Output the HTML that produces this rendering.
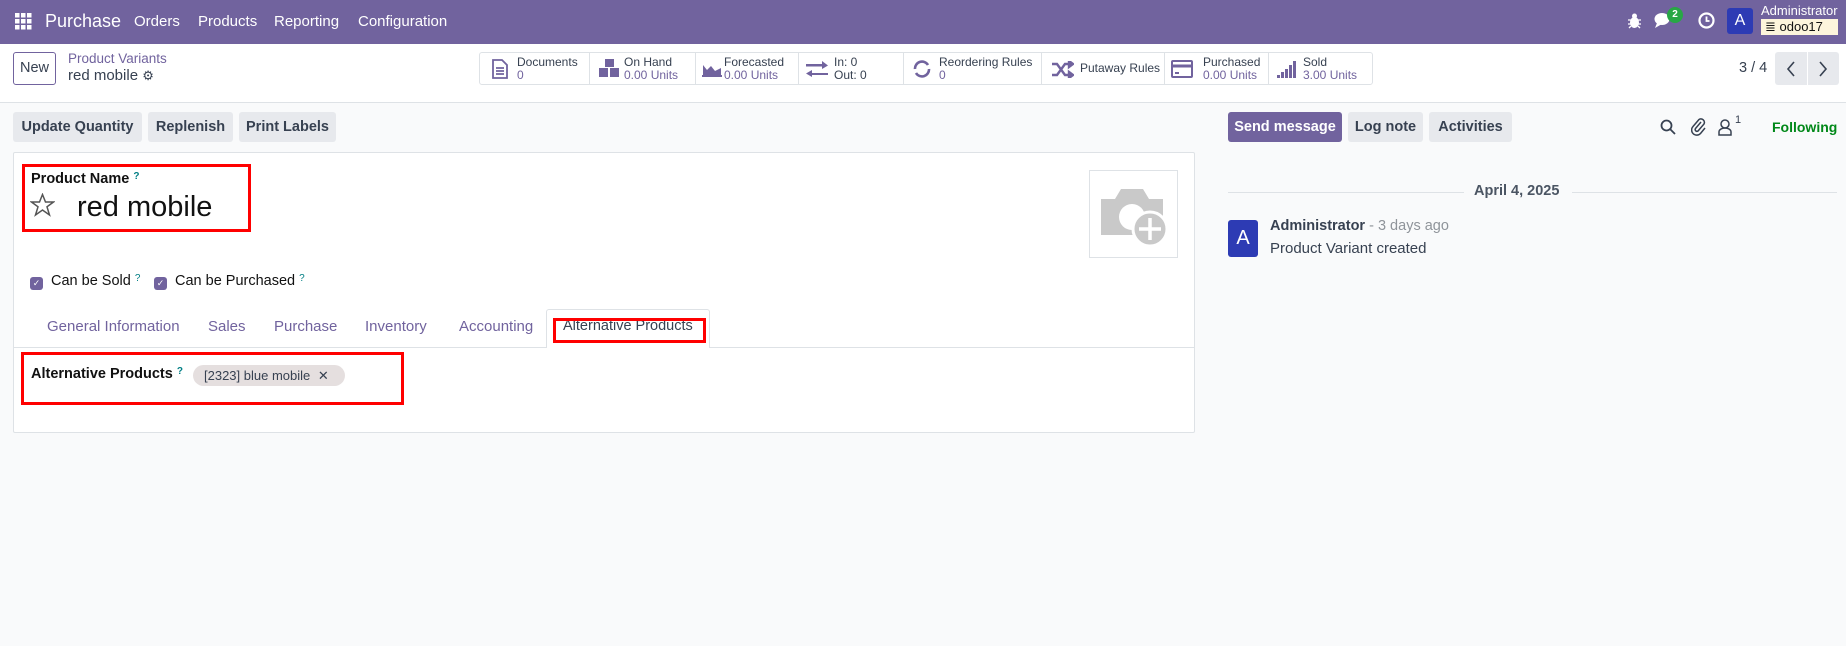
<!DOCTYPE html>
<html><head><meta charset="utf-8">
<style>
*{box-sizing:border-box;margin:0;padding:0}
body{width:1846px;height:646px;overflow:hidden;background:#f9fafb;font-family:"Liberation Sans",sans-serif;font-size:15px;color:#374151;position:relative}
.a{position:absolute;white-space:nowrap}
.top{left:0;top:0;width:1846px;height:44px;background:#71639e;color:#fff}
.cp{left:0;top:44px;width:1846px;height:59px;background:#fff;border-bottom:1px solid #dee2e6}
.btn{position:absolute;background:#e7e9ed;border-radius:3px;font-weight:bold;font-size:14.5px;color:#374151;text-align:center;line-height:30px;height:30px}
.stats{left:479px;top:52px;width:894px;height:33px;border:1px solid #dee2e6;border-radius:3px}
.st{position:absolute;top:0;height:31px;border-right:1px solid #dee2e6;font-size:12px;line-height:13px;padding-top:3px}
.st b{font-weight:normal;color:#374151;display:block}
.st i{font-style:normal;color:#71639e;display:block}
.sheet{left:13px;top:152px;width:1182px;height:281px;background:#fff;border:1px solid #dee2e6;border-radius:2px}
.red{position:absolute;border:3px solid #f00}
.q{color:#017e84;font-size:10px;vertical-align:top}
.cb{display:inline-block;width:13px;height:13px;background:#71639e;border-radius:3px;vertical-align:-1px;margin-right:8px;color:#fff;font-size:9px;text-align:center;line-height:13px}
.tab{position:absolute;top:318px;color:#71639e;font-size:15px}
</style></head><body>
<div class="a top">
  <svg class="a" style="left:15px;top:13px" width="17" height="17" viewBox="0 0 17 17" fill="#fff"><rect x="0" y="0" width="4.5" height="4.5"/><rect x="6" y="0" width="4.5" height="4.5"/><rect x="12" y="0" width="4.5" height="4.5"/><rect x="0" y="6" width="4.5" height="4.5"/><rect x="6" y="6" width="4.5" height="4.5"/><rect x="12" y="6" width="4.5" height="4.5"/><rect x="0" y="12" width="4.5" height="4.5"/><rect x="6" y="12" width="4.5" height="4.5"/><rect x="12" y="12" width="4.5" height="4.5"/></svg>
  <div class="a" style="left:45px;top:11px;font-size:18px">Purchase</div>
  <div class="a" style="left:134px;top:13px">Orders</div>
  <div class="a" style="left:198px;top:13px">Products</div>
  <div class="a" style="left:274px;top:13px">Reporting</div>
  <div class="a" style="left:358px;top:13px">Configuration</div>
  <svg class="a" style="left:1628px;top:13px" width="13" height="16" viewBox="0 0 13 16" fill="#fff"><ellipse cx="6.5" cy="9.5" rx="4.5" ry="5.5"/><circle cx="6.5" cy="3" r="2.5"/><path d="M0 7H13M0 11H13M1 15L3 13M12 15L10 13" stroke="#fff" stroke-width="1.3"/></svg>
  <svg class="a" style="left:1654px;top:12px" width="20" height="18" viewBox="0 0 20 18" fill="#fff"><ellipse cx="8" cy="7" rx="7.5" ry="6"/><path d="M3 11 L1 16 L8 12Z"/></svg>
  <div class="a" style="left:1667px;top:7px;width:16px;height:16px;border-radius:8px;background:#28a745;font-size:10px;text-align:center;line-height:16px;font-weight:bold">2</div>
  <svg class="a" style="left:1698px;top:12px" width="17" height="17" viewBox="0 0 17 17"><circle cx="8.5" cy="8.5" r="7" fill="none" stroke="#fff" stroke-width="2.2"/><path d="M8.5 4.5V9H11.5" stroke="#fff" stroke-width="1.8" fill="none"/></svg>
  <div class="a" style="left:1727px;top:8px;width:26px;height:26px;background:#2d3bb4;border-radius:3px;text-align:center;line-height:26px;font-size:16px">A</div>
  <div class="a" style="left:1761px;top:3px;font-size:13px">Administrator</div>
  <div class="a" style="left:1761px;top:19px;width:77px;height:16px;background:#fdf5dc;color:#111;font-size:13px;line-height:16px;padding-left:4px">≣ odoo17</div>
</div>
<div class="a cp">
  <div class="a" style="left:13px;top:8px;width:43px;height:33px;border:1px solid #71639e;border-radius:3px;text-align:center;line-height:31px;font-size:14.5px;color:#374151">New</div>
  <div class="a" style="left:68px;top:7px;font-size:13.5px;color:#71639e">Product Variants</div>
  <div class="a" style="left:68px;top:23px;font-size:15px">red mobile <span style="font-size:13px">⚙</span></div>
  <div class="a" style="left:1739px;top:8px;line-height:33px;font-size:14.5px">3 / 4</div>
  <div class="a" style="left:1775px;top:8px;width:64px;height:33px;background:#e7e9ed;border-radius:3px"></div>
  <div class="a" style="left:1807px;top:8px;width:1px;height:33px;background:#fff"></div>
  <svg class="a" style="left:1786px;top:17px" width="10" height="16" viewBox="0 0 10 16" fill="none" stroke="#374151" stroke-width="1.6"><path d="M8 1L2 8L8 15"/></svg>
  <svg class="a" style="left:1818px;top:17px" width="10" height="16" viewBox="0 0 10 16" fill="none" stroke="#374151" stroke-width="1.6"><path d="M2 1L8 8L2 15"/></svg>
</div>
<div class="a stats">
  <div class="st" style="left:0;width:110px;padding-left:37px">
    <svg class="a" style="left:12px;top:6px" width="16" height="20" viewBox="0 0 16 20" fill="none" stroke="#71639e" stroke-width="1.8"><path d="M1 1H10L15 6V19H1Z M4 9H12M4 12H12M4 15H12"/></svg><b>Documents</b><i>0</i></div>
  <div class="st" style="left:110px;width:106px;padding-left:34px">
    <svg class="a" style="left:7px;top:5px" width="26" height="22" viewBox="0 0 26 22" fill="#71639e"><rect x="8" y="1" width="9" height="8"/><rect x="2" y="10" width="9" height="9"/><rect x="13" y="10" width="9" height="9"/></svg><b>On Hand</b><i>0.00 Units</i></div>
  <div class="st" style="left:216px;width:103px;padding-left:28px">
    <svg class="a" style="left:6px;top:8px" width="20" height="16" viewBox="0 0 20 16" fill="#71639e"><path d="M1 15V4L5 9L9 5L13 10L19 7V15Z"/><rect x="0" y="14" width="20" height="2"/></svg><b>Forecasted</b><i>0.00 Units</i></div>
  <div class="st" style="left:319px;width:105px;padding-left:35px">
    <svg class="a" style="left:7px;top:8px" width="22" height="16" viewBox="0 0 22 16" fill="#71639e"><path d="M0 3H16V0L22 4.5L16 8V5.5H0Z M22 12H6V9L0 12.5L6 16V14H22Z"/></svg><b>In: 0</b><b>Out: 0</b></div>
  <div class="st" style="left:424px;width:138px;padding-left:35px">
    <svg class="a" style="left:8px;top:7px" width="20" height="18" viewBox="0 0 20 18" fill="none" stroke="#71639e" stroke-width="2.6"><path d="M3 9A7 7 0 0 1 16 5M17 9A7 7 0 0 1 4 13"/></svg><b>Reordering Rules</b><i>0</i></div>
  <div class="st" style="left:562px;width:123px;padding-left:38px;padding-top:9px">
    <svg class="a" style="left:10px;top:8px" width="22" height="17" viewBox="0 0 22 17" fill="none" stroke="#71639e" stroke-width="2.4"><path d="M0 3H5L13 14H18M0 14H5L13 3H18"/><path d="M17 0L21 3L17 6ZM17 11L21 14L17 17Z" fill="#71639e"/></svg><b>Putaway Rules</b></div>
  <div class="st" style="left:685px;width:104px;padding-left:38px">
    <svg class="a" style="left:6px;top:7px" width="22" height="18" viewBox="0 0 22 18" fill="none" stroke="#71639e" stroke-width="2"><rect x="1" y="1" width="20" height="16" rx="1"/><path d="M1 6H21" stroke-width="3"/><path d="M4 13H8"/></svg><b>Purchased</b><i>0.00 Units</i></div>
  <div class="st" style="left:789px;width:103px;border-right:none;padding-left:34px">
    <svg class="a" style="left:8px;top:8px" width="20" height="17" viewBox="0 0 20 17" fill="#71639e"><rect x="0" y="14" width="3" height="3"/><rect x="4" y="11" width="3" height="6"/><rect x="8" y="8" width="3" height="9"/><rect x="12" y="4" width="3" height="13"/><rect x="16" y="0" width="3" height="17"/></svg><b>Sold</b><i>3.00 Units</i></div>
</div>
<div class="btn" style="left:13px;top:112px;width:129px">Update Quantity</div>
<div class="btn" style="left:148px;top:112px;width:85px">Replenish</div>
<div class="btn" style="left:239px;top:112px;width:97px">Print Labels</div>
<div class="btn" style="left:1228px;top:112px;width:114px;background:#71639e;color:#fff">Send message</div>
<div class="btn" style="left:1348px;top:112px;width:75px">Log note</div>
<div class="btn" style="left:1429px;top:112px;width:83px">Activities</div>
<svg class="a" style="left:1660px;top:119px" width="16" height="16" viewBox="0 0 16 16" fill="none" stroke="#374151" stroke-width="1.8"><circle cx="6.5" cy="6.5" r="5"/><path d="M10 10L15 15"/></svg>
<svg class="a" style="left:1691px;top:117px" width="15" height="19" viewBox="0 0 15 19" fill="none" stroke="#374151" stroke-width="1.5"><path d="M10 5L4.5 11.5A1.8 1.8 0 0 0 7 14L13 7A3.5 3.5 0 0 0 8 2.5L2 9.5A5 5 0 0 0 9.5 16.5L14 11"/></svg>
<svg class="a" style="left:1718px;top:119px" width="14" height="17" viewBox="0 0 14 17" fill="none" stroke="#374151" stroke-width="1.5"><circle cx="7" cy="5" r="4"/><path d="M1 16V13A6 4 0 0 1 13 13V16Z"/></svg>
<div class="a" style="left:1735px;top:114px;font-size:11px">1</div>
<div class="a" style="left:1772px;top:119px;font-weight:bold;color:#008818;font-size:14px">Following</div>
<div class="a" style="left:1228px;top:192px;width:236px;height:1px;background:#dee2e6"></div>
<div class="a" style="left:1572px;top:192px;width:265px;height:1px;background:#dee2e6"></div>
<div class="a" style="left:1474px;top:183px;font-weight:bold;font-size:14.5px;color:#4b5563">April 4, 2025</div>
<div class="a" style="left:1228px;top:220px;width:30px;height:37px;background:#2d3bb4;border-radius:3px;color:#fff;text-align:center;line-height:37px;font-size:20px">A</div>
<div class="a" style="left:1270px;top:218px;font-size:14.5px"><b>Administrator</b> <span style="color:#8f949a">- 3 days ago</span></div>
<div class="a" style="left:1270px;top:240px;font-size:15px">Product Variant created</div>

<div class="a sheet"></div>
<div class="red" style="left:22px;top:164px;width:229px;height:68px"></div>
<div class="a" style="left:31px;top:171px;font-weight:bold;font-size:14.5px;color:#111">Product Name <span class="q">?</span></div>
<svg class="a" style="left:30px;top:193px" width="25" height="24" viewBox="0 0 24 24" fill="none" stroke="#555" stroke-width="1.5"><path d="M12 1.5L15 9H23L16.5 13.8L19 22L12 17L5 22L7.5 13.8L1 9H9Z"/></svg>
<div class="a" style="left:77px;top:191px;font-size:29px;color:#111">red mobile</div>
<div class="a" style="left:1089px;top:170px;width:89px;height:88px;border:1px solid #dee2e6"></div>
<svg class="a" style="left:1099px;top:185px" width="70" height="62" viewBox="0 0 70 62"><path d="M2 14H16L22 4H44L50 14H64V50H2Z" fill="#c9c9c9"/><circle cx="33" cy="32" r="13" fill="#fff"/><circle cx="51" cy="44" r="17" fill="#c9c9c9" stroke="#fff" stroke-width="3"/><path d="M51 33V55M40 44H62" stroke="#fff" stroke-width="3.5"/></svg>
<div class="a" style="left:30px;top:273px;font-size:14.5px;color:#111"><span class="cb">✓</span>Can be Sold <span class="q">?</span></div>
<div class="a" style="left:154px;top:273px;font-size:14.5px;color:#111"><span class="cb">✓</span>Can be Purchased <span class="q">?</span></div>
<div class="a" style="left:13px;top:347px;width:1182px;height:1px;background:#dee2e6"></div>
<div class="a" style="left:546px;top:309px;width:164px;height:39px;background:#fff;border:1px solid #dee2e6;border-bottom:none;border-radius:3px 3px 0 0"></div>
<div class="tab" style="left:47px">General Information</div>
<div class="tab" style="left:208px">Sales</div>
<div class="tab" style="left:274px">Purchase</div>
<div class="tab" style="left:365px">Inventory</div>
<div class="tab" style="left:459px">Accounting</div>
<div class="tab" style="left:563px;color:#374151;font-size:14.5px">Alternative Products</div>
<div class="red" style="left:553px;top:318px;width:153px;height:25px"></div>
<div class="red" style="left:21px;top:352px;width:383px;height:53px"></div>
<div class="a" style="left:31px;top:366px;font-weight:bold;font-size:14.5px;color:#111">Alternative Products <span class="q">?</span></div>
<div class="a" style="left:193px;top:365px;width:152px;height:21px;background:#e5dfdf;border-radius:11px;font-size:13px;line-height:21px;padding-left:11px;color:#374151">[2323] blue mobile <span style="margin-left:4px">✕</span></div>
</body></html>
